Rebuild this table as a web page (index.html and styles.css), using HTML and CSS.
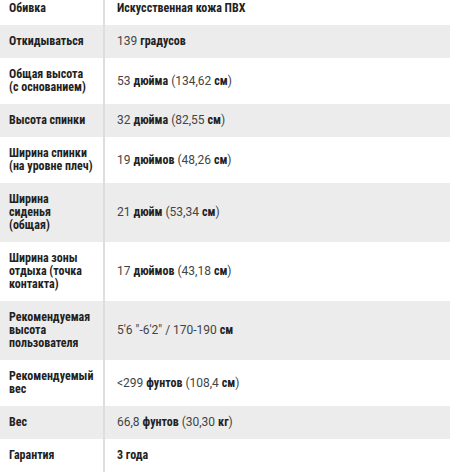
FILE: index.html
```html
<!DOCTYPE html>
<html lang="ru">
<head>
<meta charset="utf-8">
<link rel="stylesheet" href="styles.css">
</head>
<body>
<table class="specs">
  <colgroup><col class="col-name"><col class="col-value"></colgroup>
  <tr><th>Обивка</th><td><b>Искусственная кожа ПВХ</b></td></tr>
  <tr><th>Откидываться</th><td>139 <b>градусов</b></td></tr>
  <tr><th>Общая высота (с основанием)</th><td>53 <b>дюйма</b> (134,62 <b>см</b>)</td></tr>
  <tr><th>Высота спинки</th><td>32 <b>дюйма</b> (82,55 <b>см</b>)</td></tr>
  <tr><th>Ширина спинки (на уровне плеч)</th><td>19 <b>дюймов</b> (48,26 <b>см</b>)</td></tr>
  <tr><th>Ширина сиденья (общая)</th><td>21 <b>дюйм</b> (53,34 <b>см</b>)</td></tr>
  <tr><th>Ширина зоны отдыха (точка контакта)</th><td>17 <b>дюймов</b> (43,18 <b>см</b>)</td></tr>
  <tr><th>Рекомендуемая высота пользователя</th><td>5'6 "-6'2" / 170-190 <b>см</b></td></tr>
  <tr><th>Рекомендуемый вес</th><td>&lt;299 <b>фунтов</b> (108,4 <b>см</b>)</td></tr>
  <tr><th>Вес</th><td>66,8 <b>фунтов</b> (30,30 <b>кг</b>)</td></tr>
  <tr><th>Гарантия</th><td><b>3 года</b></td></tr>
</table>
</body>
</html>
```
FILE: styles.css
```css
html, body {
  margin: 0;
  padding: 0;
  background: #fff;
}
.specs {
  width: 450px;
  table-layout: fixed;
  border-collapse: collapse;
  margin-top: -8px;
  font-family: Roboto, "Open Sans", sans-serif;
  font-size: 12px;
  color: #444;
}
.col-name {
  width: 104px;
}
.specs tr:nth-child(even) {
  background: #ececec;
}
.specs th, .specs td {
  vertical-align: middle;
  padding: 10px 0;
  line-height: 13px;
  text-align: left;
}
.specs th {
  padding-left: 9px;
  padding-right: 10px;
  border-right: 2px solid #dedede;
  font-family: "Roboto Condensed", Roboto, sans-serif;
  font-stretch: condensed;
  font-weight: bold;
  font-size: 12px;
  color: #222;
}
.specs td {
  padding-left: 12px;
}
.specs b {
  font-family: "Roboto Condensed", Roboto, sans-serif;
  font-stretch: condensed;
  font-weight: bold;
  font-size: 12px;
  color: #222;
}
```
